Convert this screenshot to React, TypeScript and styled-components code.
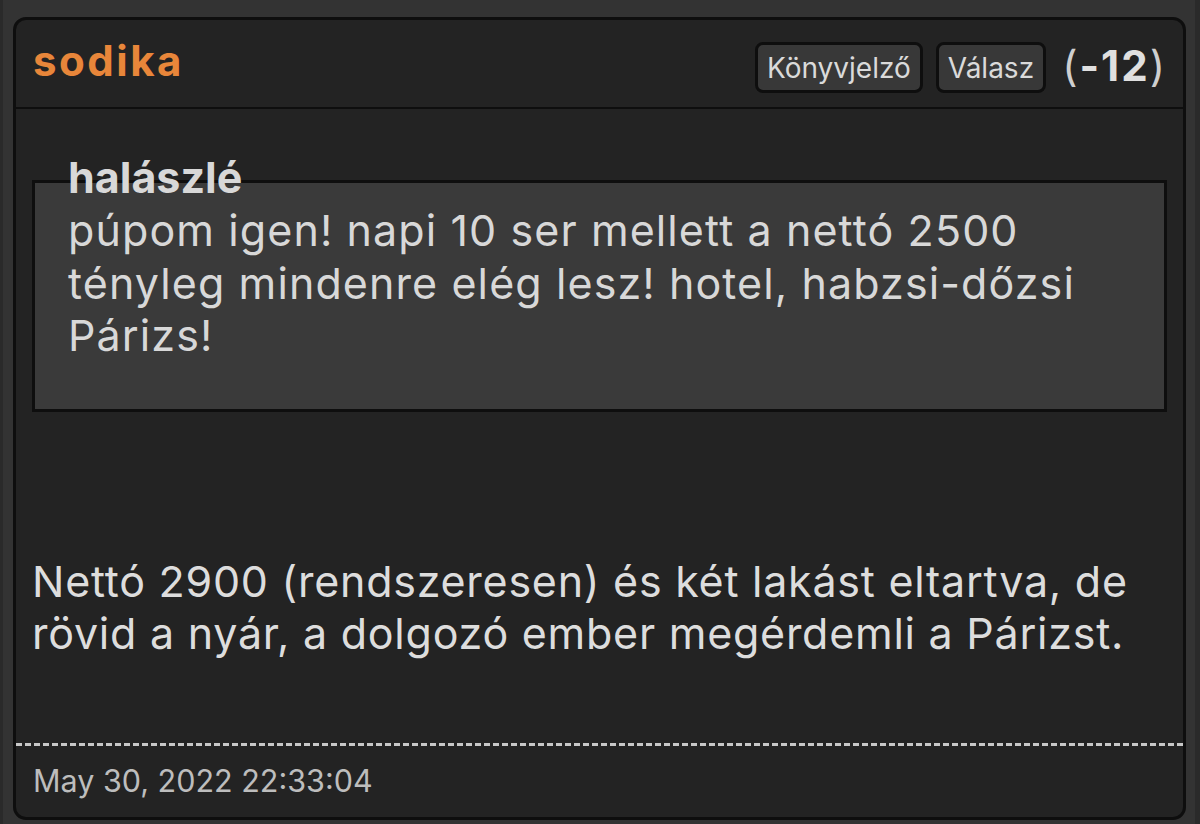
import styled, { createGlobalStyle } from "styled-components";

const GlobalStyle = createGlobalStyle`
  html, body {
    margin: 0;
    padding: 0;
    background: #333;
  }
  body {
    font-family: "Inter", "Liberation Sans", sans-serif;
    color: #dddddd;
  }
`;

const Page = styled.div`
  height: 824px;
  box-sizing: border-box;
  background: #333;
  border-left: 3px solid #2a2a2a;
  border-right: 5px solid #2a2a2a;
  padding: 17px 9px 0 10px;
`;

const Card = styled.article`
  display: flex;
  flex-direction: column;
  height: 803px;
  box-sizing: border-box;
  background: #232323;
  border: 3px solid #0e0e0e;
  border-radius: 13px;
  overflow: hidden;
`;

const Header = styled.header`
  display: flex;
  align-items: flex-start;
  justify-content: space-between;
  height: 89px;
  box-sizing: border-box;
  padding: 15px 16px 0 17px;
  border-bottom: 2px solid #0e0e0e;
`;

const Author = styled.div`
  color: #e8863a;
  font-size: 42px;
  font-weight: 700;
  letter-spacing: 2.5px;
  line-height: 51px;
`;

const Actions = styled.div`
  display: flex;
  align-items: center;
  gap: 13px;
  margin-top: 5px;
`;

const ActionButton = styled.button`
  font-family: inherit;
  font-size: 28px;
  color: #dadada;
  background: #383838;
  border: 3px solid #0e0e0e;
  border-radius: 8px;
  height: 51px;
  padding: 0 9px;
  cursor: pointer;
`;

const Score = styled.span`
  font-size: 42px;
  font-weight: 700;
  letter-spacing: 2px;
  line-height: 51px;
  color: #e0e0e0;
  margin: 0 0 4px 3px;
`;

const Paren = styled.span`
  font-weight: 400;
  color: #cfcfcf;
`;

const Body = styled.div`
  flex: 1;
  padding: 42px 16px 0 16px;
`;

const QuoteTitle = styled.div`
  position: relative;
  padding-left: 36px;
  font-size: 43px;
  font-weight: 700;
  line-height: 52px;
  margin-bottom: -23px;
  color: #d8d8d8;
`;

const Quote = styled.blockquote`
  margin: 0;
  background: #3a3a3a;
  border: 3px solid #0e0e0e;
  padding: 21px 33px 47px 33px;
  font-size: 43px;
  letter-spacing: 1.1px;
  line-height: 52.5px;
  color: #d8d8d8;
`;

const Text = styled.p`
  margin: 143px 0 0 0;
  font-size: 43px;
  letter-spacing: 0.75px;
  line-height: 52px;
`;

const DashedRule = styled.div`
  height: 3px;
  background: repeating-linear-gradient(
    to right,
    #c8c8c8 0 6px,
    transparent 6px 9px
  );
`;

const Footer = styled.footer`
  padding: 15px 16px 16px 17px;
  font-size: 30.5px;
  line-height: 40px;
  color: #bdbdbd;
`;

export default function App() {
  return (
    <>
      <GlobalStyle />
      <Page>
        <Card>
          <Header>
            <Author>sodika</Author>
            <Actions>
              <ActionButton>Könyvjelző</ActionButton>
              <ActionButton>Válasz</ActionButton>
              <Score>
                <Paren>(</Paren>-12<Paren>)</Paren>
              </Score>
            </Actions>
          </Header>
          <Body>
            <QuoteTitle>halászlé</QuoteTitle>
            <Quote>
              púpom igen! napi 10 ser mellett a nettó 2500 tényleg mindenre
              elég lesz! hotel, habzsi-dőzsi Párizs!
            </Quote>
            <Text>
              Nettó 2900 (rendszeresen) és két lakást eltartva, de rövid a
              nyár, a dolgozó ember megérdemli a Párizst.
            </Text>
          </Body>
          <DashedRule />
          <Footer>May 30, 2022 22:33:04</Footer>
        </Card>
      </Page>
    </>
  );
}
